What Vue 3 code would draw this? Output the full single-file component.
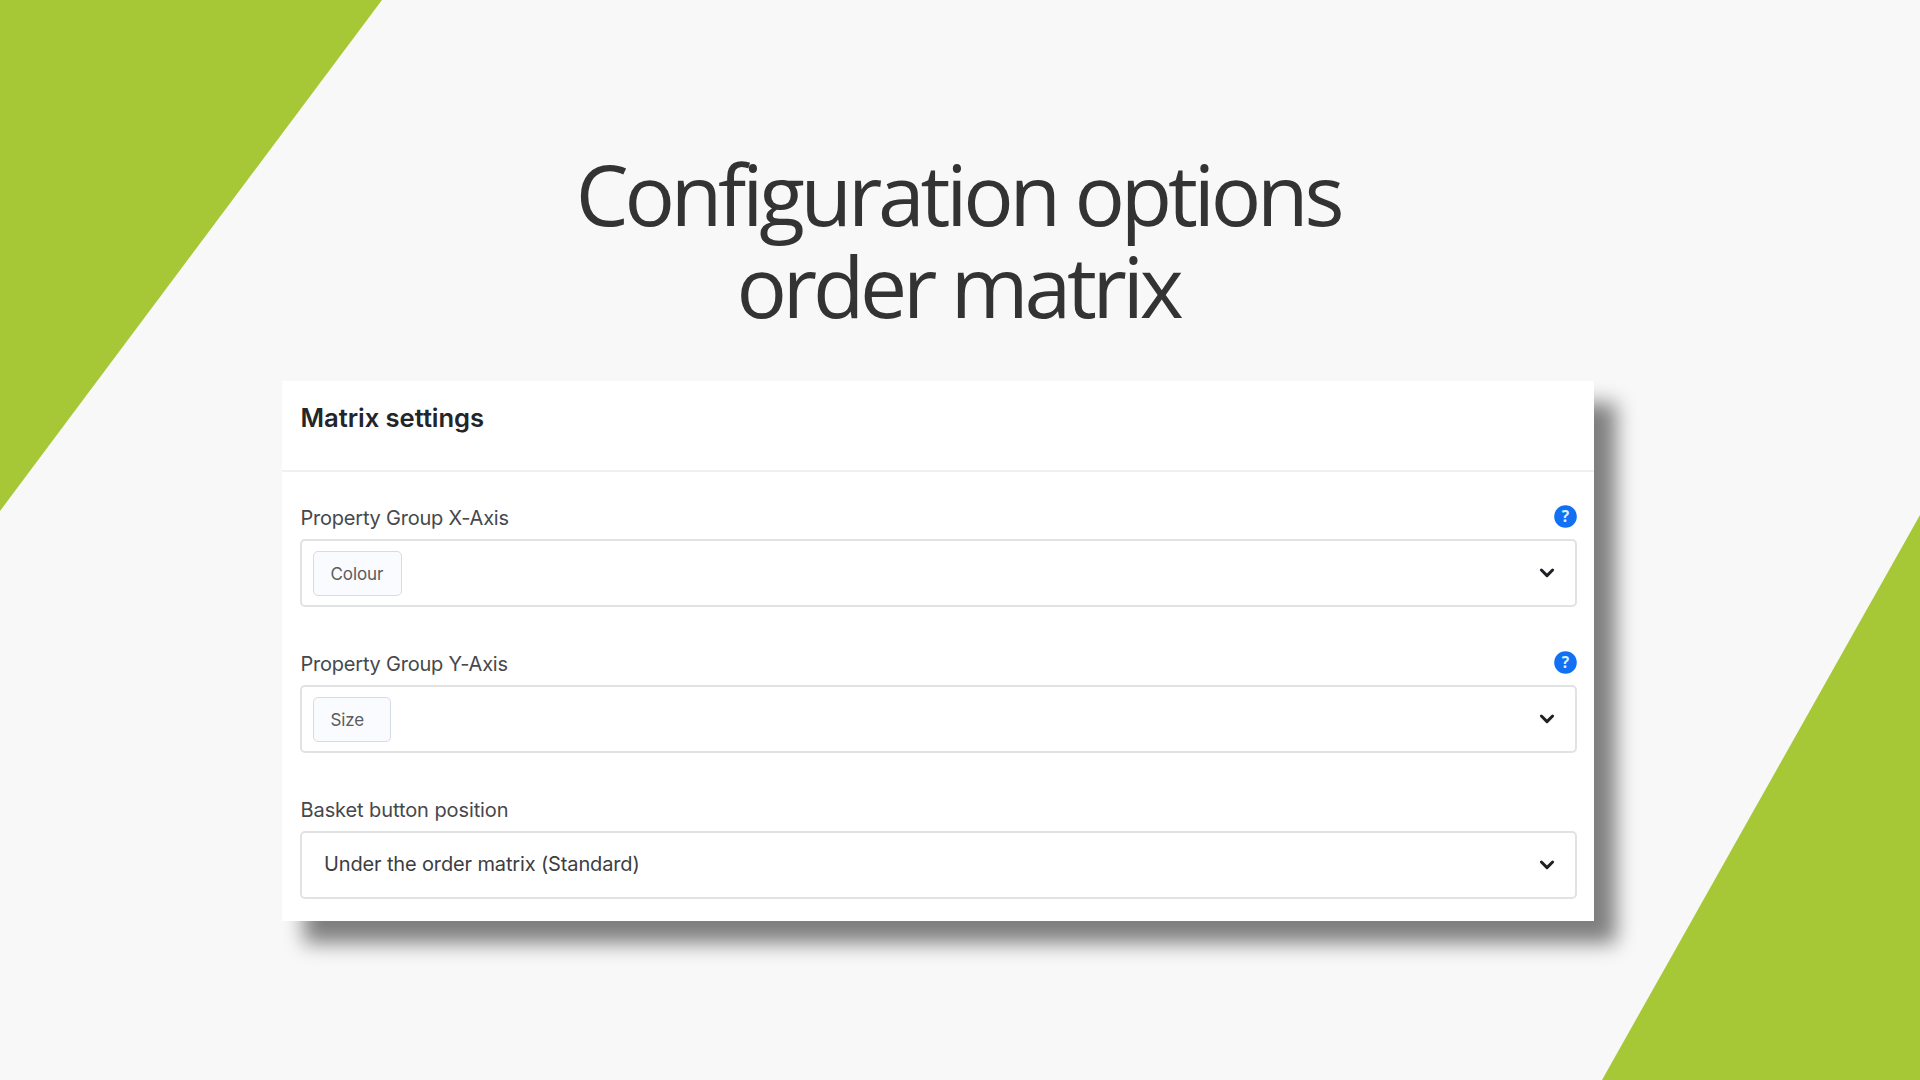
<template>
    <main class="slide">
        <svg class="slide-shapes" viewBox="0 0 1920 1080" aria-hidden="true">
            <polygon points="0,0 382,0 0,511" />
            <polygon points="1920,515 1920,1080 1602,1080" />
        </svg>
        <h1 class="slide-title">Configuration options order matrix</h1>
        <section class="card">
            <header class="card-header">
                <h2 class="card-title">Matrix settings</h2>
            </header>
            <div class="card-body">
                <div v-for="field in fields" :key="field.label" class="field" :class="field.name">
                    <div class="field-head">
                        <label class="field-label">{{ field.label }}</label>
                        <svg v-if="field.help" class="help" viewBox="0 0 23 23">
                            <circle cx="11.5" cy="11.5" r="11.3" />
                            <text x="11.5" y="17" text-anchor="middle">?</text>
                        </svg>
                    </div>
                    <div class="select">
                        <span v-if="field.tag" class="tag">{{ field.tag }}</span>
                        <span v-else class="select-value">{{ field.value }}</span>
                        <svg class="chevron" viewBox="0 0 16 12">
                            <path d="M2.4 3 L8 8.6 L13.6 3" />
                        </svg>
                    </div>
                </div>
            </div>
        </section>
    </main>
</template>

<script setup>
const fields = [
    { name: 'x-axis', label: 'Property Group X-Axis', tag: 'Colour', help: true },
    { name: 'y-axis', label: 'Property Group Y-Axis', tag: 'Size', help: true },
    { name: 'basket', label: 'Basket button position', value: 'Under the order matrix (Standard)' }
]
</script>

<style>
body {
    margin: 0;
}
</style>

<style scoped>
.slide {
    position: relative;
    box-sizing: border-box;
    width: 1920px;
    height: 1080px;
    padding-top: 148px;
    overflow: hidden;
    background: #f8f8f8;
    font-family: Inter, "Liberation Sans", sans-serif;
}

.slide-shapes {
    position: absolute;
    inset: 0;
    width: 1920px;
    height: 1080px;
    fill: #a6c837;
}

.slide-title {
    position: relative;
    width: 800px;
    margin: 0 0 0 558px;
    text-align: center;
    font-family: "Open Sans", sans-serif;
    font-size: 84px;
    font-weight: 400;
    line-height: 92px;
    letter-spacing: -4.2px;
    color: #333;
}

.card {
    position: relative;
    box-sizing: border-box;
    width: 1312px;
    height: 539.5px;
    margin: 49px 0 0 281.5px;
    background: #fff;
    box-shadow: 22px 22px 19px rgba(0, 0, 0, 0.49);
}

.card-header {
    box-sizing: border-box;
    height: 91px;
    padding: 21px 19px 0;
    border-bottom: 2px solid #f0f0f1;
}

.card-title {
    margin: 0;
    font-size: 25.6px;
    font-weight: 600;
    line-height: 32px;
    letter-spacing: -0.05px;
    color: #232529;
}

.card-body {
    display: flex;
    flex-direction: column;
    gap: 38px;
    padding: 27px 17px 0 18.5px;
}

.field {
    height: 108px;
}

.field-head {
    display: flex;
    justify-content: space-between;
    height: 40px;
}

.field-label {
    padding-left: 0.5px;
    font-size: 20px;
    line-height: 38px;
    letter-spacing: -0.22px;
    color: #46484c;
}

.basket .field-label {
    letter-spacing: -0.09px;
}

.help {
    width: 23px;
    height: 23px;
    margin-top: 6px;
    fill: #1171f2;
}

.help text {
    font-family: "Open Sans", sans-serif;
    font-size: 15.5px;
    font-weight: 700;
    fill: #d9f1ff;
}

.select {
    display: flex;
    align-items: center;
    box-sizing: border-box;
    height: 68px;
    padding: 0 20px 0 10.5px;
    border: 2px solid #e0e2e4;
    border-radius: 5px;
}

.tag {
    box-sizing: border-box;
    width: 89px;
    height: 45px;
    padding-left: 17px;
    border: 1.5px solid #d6dce4;
    border-radius: 5px;
    background: #f9fbfe;
    font-size: 17px;
    line-height: 44px;
    letter-spacing: -0.1px;
    color: #5a5c60;
}

.y-axis .tag {
    width: 78.5px;
}

.select-value {
    padding: 0 0 2px 11.5px;
    font-size: 20px;
    letter-spacing: -0.14px;
    color: #3c3e42;
}

.chevron {
    width: 16px;
    height: 12px;
    margin-left: auto;
    fill: none;
    stroke: #1f2125;
    stroke-width: 3;
    stroke-linecap: round;
    stroke-linejoin: round;
}
</style>
